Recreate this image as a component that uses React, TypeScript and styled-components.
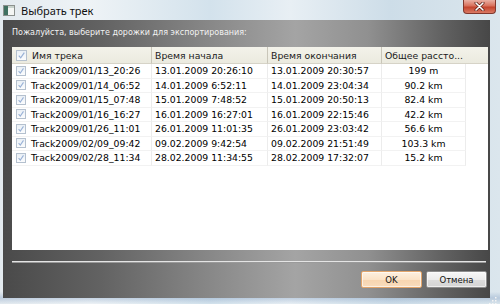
import React from "react";
import styled, { createGlobalStyle } from "styled-components";

const Global = createGlobalStyle`
  html, body { margin: 0; padding: 0; }
  body { width: 500px; height: 304px; overflow: hidden; background: #dde8ef; }
`;

const Frame = styled.div`
  position: relative;
  width: 500px;
  height: 304px;
  overflow: hidden;
  display: flex;
  flex-direction: column;
  font-family: "DejaVu Sans", sans-serif;
  background:
    linear-gradient(180deg, rgba(255,255,255,0) 0%, rgba(255,255,255,0) 96%, rgba(120,150,190,0.35) 98%, rgba(255,255,255,0) 100%),
    linear-gradient(90deg, #e3eaef 0%, #eef3f6 18%, #d3e2ec 42%, #e8eff4 58%, #cddde8 78%, #dbe6ed 100%);
`;

const TitleBar = styled.div`
  height: 20px;
  flex-shrink: 0;
  display: flex;
  align-items: center;
  padding-left: 3px;
`;

const TitleText = styled.span`
  font-family: "Noto Sans", sans-serif;
  font-size: 11px;
  color: #111;
  margin-left: 6px;
  margin-top: 1px;
`;

const CloseButton = styled.div`
  margin-left: auto;
  margin-right: 4px;
  align-self: flex-start;
  width: 33px;
  height: 14px;
  box-sizing: border-box;
  border: 1px solid #80382e;
  border-top: none;
  border-radius: 0 0 4px 4px;
  background: linear-gradient(180deg, #eab0a4 0%, #d8705c 45%, #c4442e 55%, #da7a64 100%);
  display: flex;
  align-items: center;
  justify-content: center;
`;

const Body = styled.div`
  flex: 1;
  display: flex;
  padding: 0 10px 6px 3px;
  min-height: 0;
`;

const Client = styled.div`
  flex: 1;
  display: flex;
  flex-direction: column;
  padding: 7px 2px 9px 9px;
  background: linear-gradient(90deg, #4a4a4a 0%, #626262 20%, #8c8c8c 45%, #a4a4a4 60%, #909090 75%, #626262 90%, #474747 100%);
`;

const Instruction = styled.div`
  height: 12px;
  line-height: 12px;
  font-size: 8px;
  color: #f2f2f2;
  margin-bottom: 8px;
  white-space: nowrap;
`;

const Table = styled.div`
  height: 203px;
  background: #ffffff;
  display: grid;
  grid-template-columns: 140px 116px 114px 84px 1fr;
  grid-auto-rows: 14.5px;
  grid-template-rows: 17px;
  align-content: start;
  font-size: 9.3px;
  color: #000;
`;

const HeaderCell = styled.div<{ $span?: number; $last?: boolean }>`
  grid-column: span ${(p) => p.$span ?? 1};
  display: flex;
  align-items: center;
  gap: 5px;
  padding-left: 3px;
  background: linear-gradient(180deg, #f3f2ea 0%, #ebeadf 100%);
  border-bottom: 1px solid #d6d3c7;
  border-right: ${(p) => (p.$last ? "none" : "1px solid #c9c6b9")};
  color: #1a1a1a;
  white-space: nowrap;
  overflow: hidden;
`;

const Cell = styled.div<{ $center?: boolean }>`
  display: flex;
  align-items: center;
  gap: 5px;
  justify-content: ${(p) => (p.$center ? "center" : "flex-start")};
  padding-left: ${(p) => (p.$center ? 0 : 3)}px;
  border-right: 1px solid #ececec;
  border-bottom: 1px solid #f2f2f2;
  white-space: nowrap;
`;

const NameCell = styled(Cell)`
  padding-left: 4px;
`;

const Filler = styled.div``;

const Box = styled.span<{ $size: number }>`
  width: ${(p) => p.$size}px;
  height: ${(p) => p.$size}px;
  box-sizing: border-box;
  border: 1px solid #b4c0ce;
  background: linear-gradient(180deg, #eaf0f6 0%, #fbfcfd 100%);
  display: inline-flex;
  align-items: center;
  justify-content: center;
  flex-shrink: 0;
`;

const Separator = styled.div`
  margin-top: 11px;
  margin-right: 2px;
  height: 1px;
  background: #e4e4e4;
  border-bottom: 1px solid #9a9a9a;
`;

const ButtonRow = styled.div`
  margin-top: 8px;
  display: flex;
  justify-content: flex-end;
  gap: 4px;
  padding-right: 1px;
`;

const Button = styled.div<{ $default?: boolean }>`
  width: 61px;
  height: 17px;
  box-sizing: border-box;
  border-radius: 2px;
  border: 1px solid ${(p) => (p.$default ? "#e3a56a" : "#8d8d8d")};
  background: ${(p) =>
    p.$default
      ? "linear-gradient(180deg, #fdf0e0 0%, #fbe3c7 50%, #f7d5b0 51%, #f9dcbc 100%)"
      : "linear-gradient(180deg, #f7f7f7 0%, #ececec 50%, #dddddd 51%, #d4d4d4 100%)"};
  box-shadow: inset 0 0 0 1px rgba(255,255,255,0.6);
  display: flex;
  align-items: center;
  justify-content: center;
  font-size: 8.5px;
  color: #111;
`;

const Grip = styled.div`
  position: absolute;
  right: 3px;
  bottom: 6px;
  width: 8px;
  height: 8px;
`;

const Check: React.FC<{ size: number }> = ({ size }) => (
  <Box $size={size}>
    <svg width={size - 2} height={size - 2} viewBox="0 0 9 9">
      <path d="M1.8 4.6 L3.7 6.8 L7.3 1.6" fill="none" stroke="#98b1d6" strokeWidth="1.2" />
    </svg>
  </Box>
);

const rows: [string, string, string, string][] = [
  ["Track2009/01/13_20:26", "13.01.2009 20:26:10", "13.01.2009 20:30:57", "199 m"],
  ["Track2009/01/14_06:52", "14.01.2009 6:52:11", "14.01.2009 23:04:34", "90.2 km"],
  ["Track2009/01/15_07:48", "15.01.2009 7:48:52", "15.01.2009 20:50:13", "82.4 km"],
  ["Track2009/01/16_16:27", "16.01.2009 16:27:01", "16.01.2009 22:15:46", "42.2 km"],
  ["Track2009/01/26_11:01", "26.01.2009 11:01:35", "26.01.2009 23:03:42", "56.6 km"],
  ["Track2009/02/09_09:42", "09.02.2009 9:42:54", "09.02.2009 21:51:49", "103.3 km"],
  ["Track2009/02/28_11:34", "28.02.2009 11:34:55", "28.02.2009 17:32:07", "15.2 km"],
];

export default function App() {
  return (
    <>
      <Global />
      <Frame>
        <TitleBar>
          <svg width="12" height="11" viewBox="0 0 12 11">
            <rect x="0.5" y="0.5" width="11" height="10" fill="#f4f6f4" stroke="#8c918e" />
            <rect x="1" y="1" width="4" height="9" fill="#3f7060" />
            <rect x="5" y="1" width="6" height="2" fill="#c9d3cd" />
          </svg>
          <TitleText>Выбрать трек</TitleText>
          <CloseButton>
            <svg width="11" height="9" viewBox="0 0 11 9">
              <path d="M2 1 L9 8 M9 1 L2 8" stroke="#5a1e16" strokeWidth="3" strokeLinecap="round" />
              <path d="M2 1 L9 8 M9 1 L2 8" stroke="#ffffff" strokeWidth="1.6" strokeLinecap="round" />
            </svg>
          </CloseButton>
        </TitleBar>
        <Body>
          <Client>
            <Instruction>Пожалуйста, выберите дорожки для экспортирования:</Instruction>
            <Table>
              <HeaderCell style={{ paddingLeft: 4 }}>
                <Check size={11} />
                Имя трека
              </HeaderCell>
              <HeaderCell>Время начала</HeaderCell>
              <HeaderCell>Время окончания</HeaderCell>
              <HeaderCell $span={2} $last>Общее рассто...</HeaderCell>
              {rows.map((r) => (
                <React.Fragment key={r[0]}>
                  <NameCell>
                    <Check size={10} />
                    {r[0]}
                  </NameCell>
                  <Cell>{r[1]}</Cell>
                  <Cell>{r[2]}</Cell>
                  <Cell $center>{r[3]}</Cell>
                  <Filler />
                </React.Fragment>
              ))}
            </Table>
            <Separator />
            <ButtonRow>
              <Button $default>OK</Button>
              <Button>Отмена</Button>
            </ButtonRow>
          </Client>
        </Body>
        <Grip>
          <svg width="8" height="8" viewBox="0 0 8 8">
            <rect x="6" y="0" width="1.5" height="1.5" fill="#f4f4f4" />
            <rect x="3" y="3" width="1.5" height="1.5" fill="#f4f4f4" />
            <rect x="6" y="3" width="1.5" height="1.5" fill="#f4f4f4" />
            <rect x="0" y="6" width="1.5" height="1.5" fill="#f4f4f4" />
            <rect x="3" y="6" width="1.5" height="1.5" fill="#f4f4f4" />
            <rect x="6" y="6" width="1.5" height="1.5" fill="#f4f4f4" />
          </svg>
        </Grip>
      </Frame>
    </>
  );
}
